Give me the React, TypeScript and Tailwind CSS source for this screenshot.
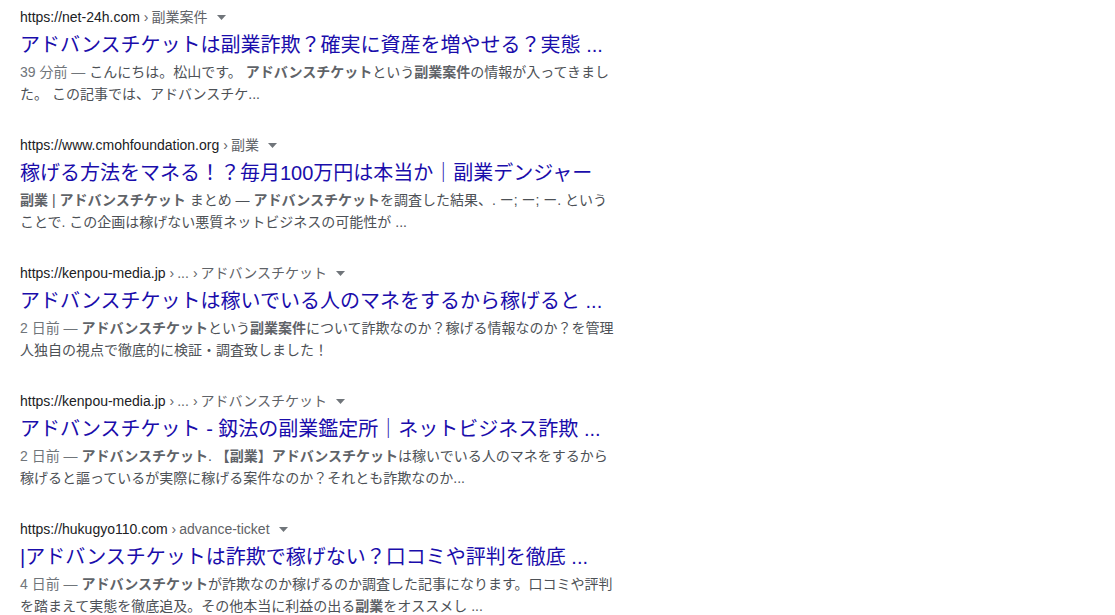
import React from 'react';

type Seg = { t: string; b?: boolean };

type Result = {
  host: string;
  crumbs: string[];
  title: string;
  date: string;
  lines: Seg[][];
};

const results: Result[] = [
  {
    host: 'https://net-24h.com',
    crumbs: ['副業案件'],
    title: 'アドバンスチケットは副業詐欺？確実に資産を増やせる？実態 ...',
    date: '39 分前',
    lines: [
      [{ t: 'こんにちは。松山です。 ' }, { t: 'アドバンスチケット', b: true }, { t: 'という' }, { t: '副業案件', b: true }, { t: 'の情報が入ってきまし' }],
      [{ t: 'た。 この記事では、アドバンスチケ...' }],
    ],
  },
  {
    host: 'https://www.cmohfoundation.org',
    crumbs: ['副業'],
    title: '稼げる方法をマネる！？毎月100万円は本当か｜副業デンジャー',
    date: '',
    lines: [
      [{ t: '副業', b: true }, { t: ' | ' }, { t: 'アドバンスチケット', b: true }, { t: ' まとめ — ' }, { t: 'アドバンスチケット', b: true }, { t: 'を調査した結果、. ー; ー; ー. という' }],
      [{ t: 'ことで. この企画は稼げない悪質ネットビジネスの可能性が ...' }],
    ],
  },
  {
    host: 'https://kenpou-media.jp',
    crumbs: ['...', 'アドバンスチケット'],
    title: 'アドバンスチケットは稼いでいる人のマネをするから稼げると ...',
    date: '2 日前',
    lines: [
      [{ t: 'アドバンスチケット', b: true }, { t: 'という' }, { t: '副業案件', b: true }, { t: 'について詐欺なのか？稼げる情報なのか？を管理' }],
      [{ t: '人独自の視点で徹底的に検証・調査致しました！' }],
    ],
  },
  {
    host: 'https://kenpou-media.jp',
    crumbs: ['...', 'アドバンスチケット'],
    title: 'アドバンスチケット - 釼法の副業鑑定所｜ネットビジネス詐欺 ...',
    date: '2 日前',
    lines: [
      [{ t: 'アドバンスチケット', b: true }, { t: '. ' }, { t: '【副業】アドバンスチケット', b: true }, { t: 'は稼いでいる人のマネをするから' }],
      [{ t: '稼げると謳っているが実際に稼げる案件なのか？それとも詐欺なのか...' }],
    ],
  },
  {
    host: 'https://hukugyo110.com',
    crumbs: ['advance-ticket'],
    title: '|アドバンスチケットは詐欺で稼げない？口コミや評判を徹底 ...',
    date: '4 日前',
    lines: [
      [{ t: 'アドバンスチケット', b: true }, { t: 'が詐欺なのか稼げるのか調査した記事になります。口コミや評判' }],
      [{ t: 'を踏まえて実態を徹底追及。その他本当に利益の出る' }, { t: '副業', b: true }, { t: 'をオススメし ...' }],
    ],
  },
];

function ResultItem({ r }: { r: Result }) {
  return (
    <div className="pb-[30px]">
      <div className="flex h-5 items-center text-[14px] leading-5 whitespace-nowrap">
        <span className="text-[#202124]">{r.host}</span>
        {r.crumbs.map((c, i) => (
          <span key={i} className="text-[#5f6368]">
            <span className="ml-[4px] mr-[3px]">›</span>
            {c}
          </span>
        ))}
        <svg className="ml-[9px]" width="9" height="5" viewBox="0 0 9 5">
          <path d="M0 0h9L4.5 5z" fill="#70757a" />
        </svg>
      </div>
      <div className="mt-[5px] text-[20px] leading-[26px] text-[#1a0dab] whitespace-nowrap">{r.title}</div>
      <div className="mt-[3px] text-[14px] leading-[22px] text-[#4d5156]">
        {r.lines.map((line, i) => (
          <div key={i} className="whitespace-nowrap">
            {i === 0 && r.date && <span className="text-[#70757a]">{r.date} — </span>}
            {line.map((s, j) =>
              s.b ? (
                <b key={j} className="font-bold text-[#5f6368]">{s.t}</b>
              ) : (
                <span key={j}>{s.t}</span>
              )
            )}
          </div>
        ))}
      </div>
    </div>
  );
}

export default function App() {
  return (
    <div
      className="h-screen overflow-hidden bg-white pl-5 pt-[7px]"
      style={{ fontFamily: '"Liberation Sans", "Noto Sans CJK JP", sans-serif' }}
    >
      {results.map((r, i) => (
        <ResultItem key={i} r={r} />
      ))}
    </div>
  );
}
